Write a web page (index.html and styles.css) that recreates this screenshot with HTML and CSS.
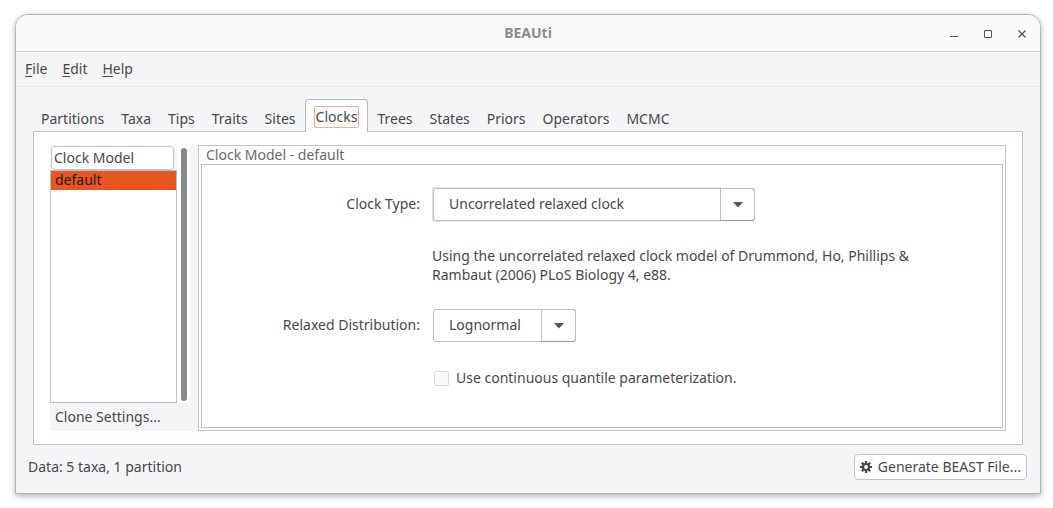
FILE: index.html
```html
<!DOCTYPE html>
<html lang="en">
<head>
<meta charset="utf-8">
<title>BEAUti</title>
<link rel="stylesheet" href="styles.css">
</head>
<body>
<div class="window">
  <header class="titlebar">
    <h1 class="title">BEAUti</h1>
    <div class="window-buttons">
      <button class="window-button" type="button" aria-label="Minimize"><svg width="12" height="12" viewBox="0 0 12 12"><path d="M2 9.500h8" stroke="currentColor" fill="none"/></svg></button>
      <button class="window-button" type="button" aria-label="Maximize"><svg width="12" height="12" viewBox="0 0 12 12"><path d="M2.500 3.500h7v7h-7z" stroke="currentColor" fill="none"/></svg></button>
      <button class="window-button" type="button" aria-label="Close"><svg width="12" height="12" viewBox="0 0 12 12"><path d="M2.500 3.500l7 7M9.500 3.500l-7 7" stroke="currentColor" stroke-width="1.400" fill="none"/></svg></button>
    </div>
  </header>
  <nav class="menubar">
    <button class="menu" type="button"><u>F</u>ile</button>
    <button class="menu" type="button"><u>E</u>dit</button>
    <button class="menu" type="button"><u>H</u>elp</button>
  </nav>
  <main class="content">
    <div class="tabs" role="tablist">
      <button class="tab" role="tab" type="button">Partitions</button>
      <button class="tab" role="tab" type="button">Taxa</button>
      <button class="tab" role="tab" type="button">Tips</button>
      <button class="tab" role="tab" type="button">Traits</button>
      <button class="tab" role="tab" type="button">Sites</button>
      <button class="tab tab-active" role="tab" type="button" aria-selected="true"><span class="tab-focus">Clocks</span></button>
      <button class="tab" role="tab" type="button">Trees</button>
      <button class="tab" role="tab" type="button">States</button>
      <button class="tab" role="tab" type="button">Priors</button>
      <button class="tab" role="tab" type="button">Operators</button>
      <button class="tab" role="tab" type="button">MCMC</button>
    </div>
    <div class="panel" role="tabpanel">
      <aside class="sidebar">
        <div class="list-area">
          <div class="list-column">
            <div class="list-head"><button class="column-button" type="button">Clock Model</button></div>
            <ul class="list"><li class="list-item">default</li></ul>
          </div>
          <div class="scrollbar"><div class="thumb"></div></div>
        </div>
        <button class="clone" type="button">Clone Settings...</button>
      </aside>
      <section class="frame">
        <h2 class="frame-title">Clock Model - default</h2>
        <form class="form">
          <label class="label" for="clock-type">Clock Type:</label>
          <div class="combo combo-wide combo-focus">
            <select class="select" id="clock-type"><option>Uncorrelated relaxed clock</option></select>
            <span class="arrow"><svg width="10" height="6" viewBox="0 0 10 6"><path d="M0 0h10L5 5.500z" fill="currentColor"/></svg></span>
          </div>
          <p class="note">Using the uncorrelated relaxed clock model of Drummond, Ho, Phillips &amp; Rambaut (2006) PLoS Biology 4, e88.</p>
          <label class="label" for="distribution">Relaxed Distribution:</label>
          <div class="combo combo-narrow">
            <select class="select" id="distribution"><option>Lognormal</option></select>
            <span class="arrow"><svg width="10" height="6" viewBox="0 0 10 6"><path d="M0 0h10L5 5.500z" fill="currentColor"/></svg></span>
          </div>
          <label class="check"><input class="checkbox" type="checkbox"> Use continuous quantile parameterization.</label>
        </form>
      </section>
    </div>
  </main>
  <footer class="statusbar">
    <span>Data: 5 taxa, 1 partition</span>
    <button class="generate" type="button">
      <svg width="12" height="12" viewBox="0 0 12 12"><g stroke="currentColor" fill="none"><circle cx="6" cy="6" r="3" stroke-width="2.200"/><path stroke-width="2.200" d="M6 0v2.500M6 9.500V12M0 6h2.500M9.500 6H12M1.800 1.800l1.700 1.700M8.500 8.500l1.700 1.700M10.200 1.800L8.500 3.500M3.500 8.500l-1.700 1.700"/></g></svg>
      Generate BEAST File...
    </button>
  </footer>
</div>
</body>
</html>
```
FILE: styles.css
```css
* { box-sizing: border-box; }
body {
  margin: 0;
  min-height: 100vh;
  display: flex;
  padding: 14px 12px 14px 15px;
  background: #fff;
  color: #484848;
  font: 14px/20px "Noto Sans", sans-serif;
}
button, select, input { font: inherit; color: inherit; margin: 0; }
button { background: none; border: 0; padding: 0; }
svg { display: block; flex: none; }
h1, h2, p, ul { margin: 0; padding: 0; font-size: inherit; font-weight: normal; list-style: none; }
.window {
  flex: 1;
  display: flex;
  flex-direction: column;
  border: 1px solid #b3b3b3;
  border-radius: 13px 13px 0 0;
  background: #f4f5f7;
  overflow: hidden;
  box-shadow: 0 2px 6px rgba(0, 0, 0, 0.3);
}
.titlebar {
  display: grid;
  grid-template-columns: 1fr auto 1fr;
  align-items: center;
  height: 37px;
  border-bottom: 1px solid #d0d0d0;
  background: #fafafa;
}
.title { grid-column: 2; color: #8b8b8b; font-weight: bold; }
.window-buttons { display: flex; justify-content: flex-end; gap: 22px; padding-right: 12px; color: #555; }
.menubar {
  display: flex;
  gap: 15px;
  height: 35px;
  padding: 0 9px;
  border-bottom: 1px solid #ebecee;
}
.menu u { text-underline-offset: 2px; }
.content { flex: 1; display: flex; flex-direction: column; padding: 12px 17px 0 17px; }
.tabs { display: flex; align-items: flex-end; gap: 1px; margin-bottom: -1px; }
.tab { height: 33px; padding: 7px 8px 0; }
.tab-active {
  position: relative;
  padding: 2px 8px 0;
  border: 1px solid #b5b7ba;
  border-bottom: 0;
  border-radius: 4px 4px 0 0;
  background: #fff;
}
.tab-focus { display: block; border: 1px solid #f7ab8f; border-radius: 2px; padding: 0 1px; }
.panel {
  flex: 1;
  display: flex;
  padding: 13px 16px;
  border: 1px solid #c1c5cb;
  background: #fff;
}
.sidebar { display: flex; flex-direction: column; width: 148px; padding-right: 8px; background: #f4f5f7; }
.list-area { flex: 1; display: flex; }
.list-column { flex: 1; display: flex; flex-direction: column; }
.list-head { height: 25px; padding: 1px 3px 0 1px; }
.column-button {
  width: 100%;
  height: 24px;
  padding: 0 2px;
  border: 1px solid #c1c5cb;
  border-radius: 4px;
  background: #fff;
  text-align: left;
}
.list { flex: 1; border: 1px solid #b9bec5; background: #fff; }
.list-item { height: 19px; padding-left: 4px; line-height: 18px; background: #e95420; color: #1f1f1f; }
.scrollbar { width: 13px; padding: 3px 3px 2px 4px; background: #fff; display: flex; }
.thumb { flex: 1; border-radius: 3px; background: #8a8a8a; }
.clone { height: 28px; padding: 0 5px; text-align: left; }
.frame {
  flex: 1;
  display: flex;
  flex-direction: column;
  padding: 0 2px 2px;
  border: 1px solid #c1c5cb;
}
.frame-title { height: 18px; padding-left: 5px; line-height: 18px; color: #6b6b6b; }
.form {
  flex: 1;
  display: grid;
  grid-template-columns: 140px minmax(0, 492px);
  justify-content: center;
  align-content: start;
  column-gap: 12px;
  padding: 22px 16px 0;
  border: 1px solid #b9bec5;
}
.label { line-height: 34px; text-align: right; }
.combo { position: relative; height: 35px; padding: 1px; }
.combo-focus { background: linear-gradient(90deg, #dce4f5 289px, transparent 289px); }
.combo-wide { width: 324px; }
.combo-narrow { width: 145px; }
.select {
  appearance: none;
  width: 100%;
  height: 33px;
  padding: 0 36px 2px 15px;
  border: 1px solid #bcbec1;
  border-radius: 3px;
  background: #fff;
}
.arrow {
  position: absolute;
  inset: 1px 1px 1px auto;
  width: 35px;
  display: grid;
  place-items: center;
  border: 1px solid #bcbec1;
  border-bottom-color: #96989a;
  border-radius: 0 3px 3px 0;
  color: #555;
  pointer-events: none;
}
.note { grid-column: 2; padding: 24px 0; line-height: 19px; }
.check { grid-column: 2; display: flex; align-items: center; gap: 7px; padding: 25px 0 0 2px; }
.checkbox {
  appearance: none;
  width: 15px;
  height: 15px;
  border: 1px solid #d9d9d9;
  border-radius: 2px;
  background: #fafafa;
}
.statusbar {
  display: flex;
  align-items: center;
  justify-content: space-between;
  height: 48px;
  padding: 0 13px 4px 12px;
}
.generate {
  display: flex;
  align-items: center;
  gap: 6px;
  height: 26px;
  padding: 0 5px;
  border: 1px solid #c1c5cb;
  border-radius: 4px;
  background: #fff;
}
```
